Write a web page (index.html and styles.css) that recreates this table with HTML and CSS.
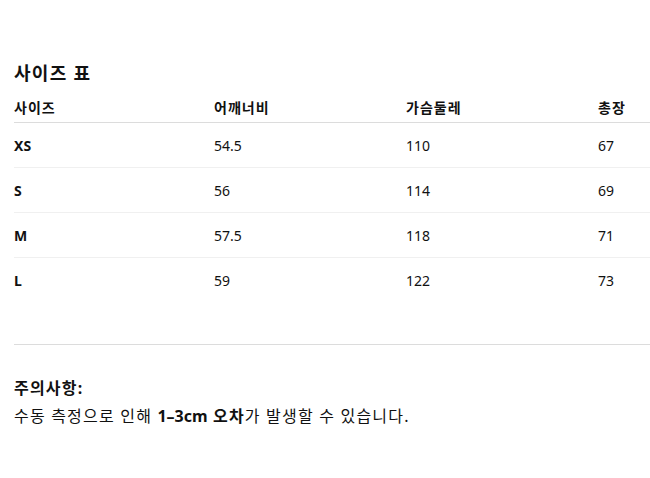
FILE: index.html
```html
<!DOCTYPE html>
<html lang="ko">
<head>
<meta charset="utf-8">
<link rel="stylesheet" href="styles.css">
</head>
<body>
<div class="page">
  <h2 class="title">사이즈 표</h2>
  <div class="table">
    <div class="row head">
      <div class="cell">사이즈</div>
      <div class="cell">어깨너비</div>
      <div class="cell">가슴둘레</div>
      <div class="cell">총장</div>
    </div>
    <div class="row">
      <div class="cell size">XS</div>
      <div class="cell">54.5</div>
      <div class="cell">110</div>
      <div class="cell">67</div>
    </div>
    <div class="row">
      <div class="cell size">S</div>
      <div class="cell">56</div>
      <div class="cell">114</div>
      <div class="cell">69</div>
    </div>
    <div class="row">
      <div class="cell size">M</div>
      <div class="cell">57.5</div>
      <div class="cell">118</div>
      <div class="cell">71</div>
    </div>
    <div class="row last">
      <div class="cell size">L</div>
      <div class="cell">59</div>
      <div class="cell">122</div>
      <div class="cell">73</div>
    </div>
  </div>
  <hr class="divider">
  <div class="note">
    <div class="note-title">주의사항:</div>
    <p class="note-text">수동 측정으로 인해 <strong><span class="latin">1–3cm</span> 오차</strong>가 발생할 수 있습니다<span class="latin">.</span></p>
  </div>
</div>
</body>
</html>
```

FILE: styles.css
```css
html, body {
  margin: 0;
  padding: 0;
  background: #fff;
}
body {
  font-family: "Noto Sans", "Noto Sans CJK KR", sans-serif;
  color: #111;
  font-size: 14px;
}
.page {
  padding: 60px 0 0 14px;
}
.title {
  margin: 0 0 6px;
  font-size: 18px;
  font-weight: 700;
  line-height: 26px;
  letter-spacing: 1.3px;
}
.table {
  display: flex;
  flex-direction: column;
}
.row {
  display: grid;
  grid-template-columns: 200px 192px 192px 1fr;
  border-bottom: 1px solid #f0f0f0;
}
.row.head {
  border-bottom: 1px solid #dcdcdc;
}
.row.last {
  border-bottom: none;
}
.cell {
  padding: 13px 0 11px;
  line-height: 20px;
}
.head .cell {
  padding: 6px 0 4px;
  font-weight: 700;
  letter-spacing: 1px;
}
.size {
  font-weight: 700;
}
.divider {
  margin: 42px 0 0;
  border: none;
  border-top: 1px solid #dcdcdc;
  height: 0;
}
.note {
  padding-top: 31px;
}
.note-title {
  font-size: 16px;
  font-weight: 700;
  line-height: 24px;
  letter-spacing: 1.2px;
}
.note-text {
  margin: 4px 0 0;
  font-size: 16px;
  line-height: 24px;
  letter-spacing: 1.2px;
}
.note-text strong {
  font-weight: 700;
}
.latin {
  letter-spacing: 0;
}
```
